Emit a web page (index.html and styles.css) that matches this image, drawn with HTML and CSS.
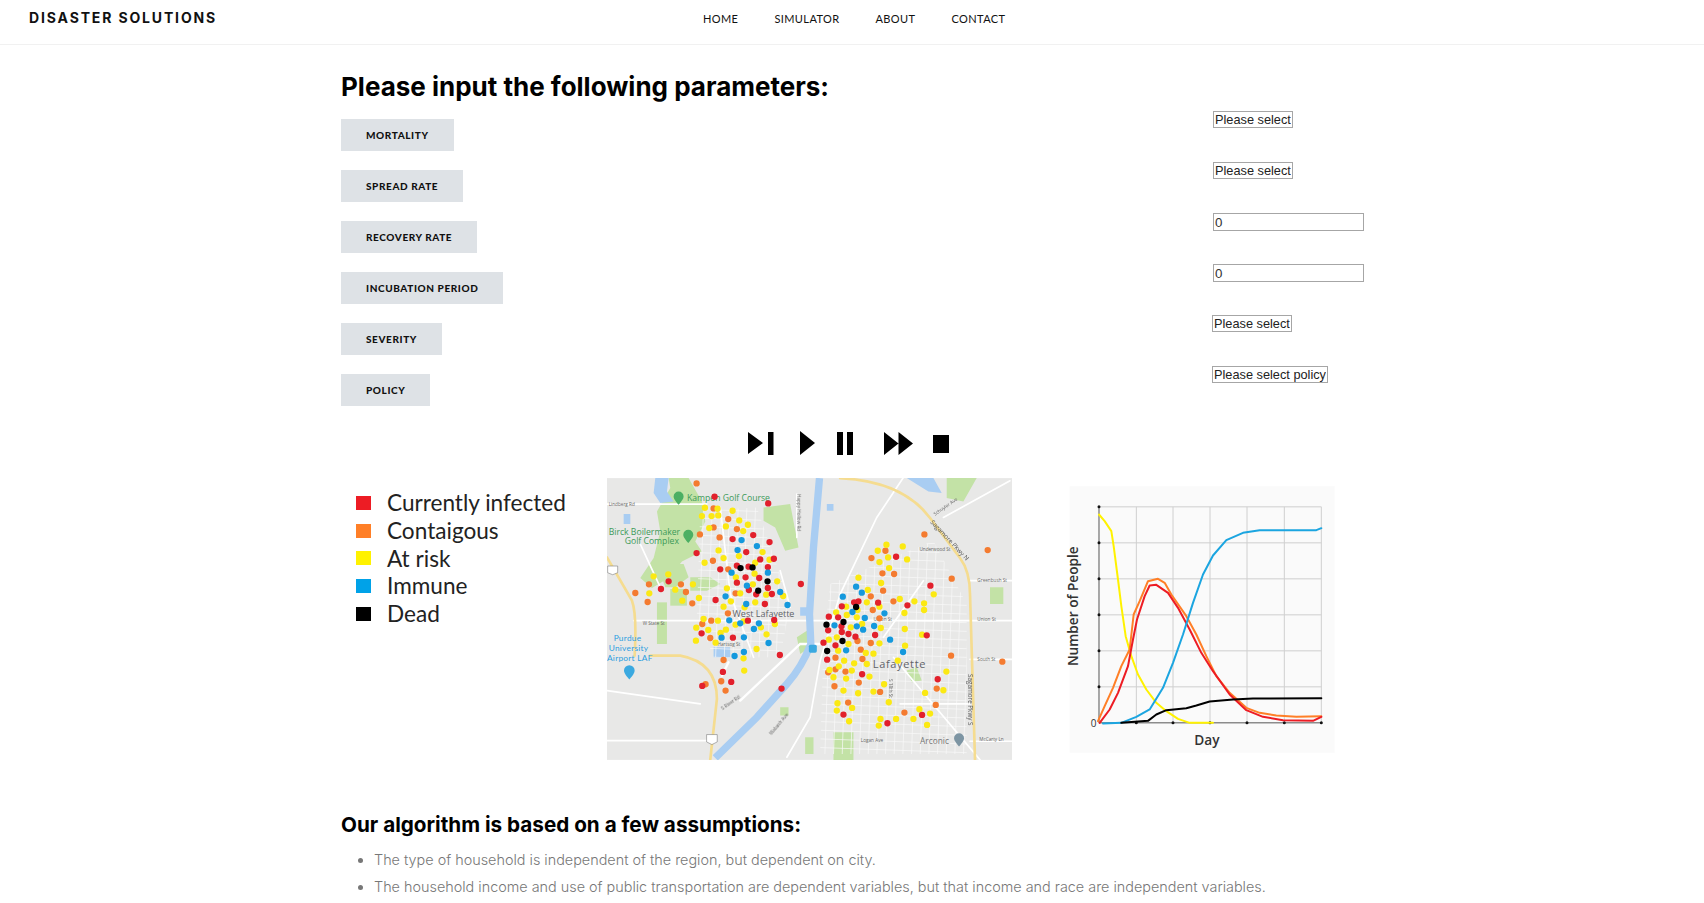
FILE: index.html
```html
<!DOCTYPE html>
<html lang="en">
<head>
  <meta charset="UTF-8">
  <meta name="viewport" content="width=device-width, initial-scale=1.0">
  <title>Disaster Solutions</title>
  <link rel="stylesheet" href="styles.css">
</head>
<body>
  <header class="navbar">
    <a class="brand" href="#">DISASTER SOLUTIONS</a>
    <nav class="nav-links">
      <a href="#">HOME</a>
      <a href="#">SIMULATOR</a>
      <a href="#">ABOUT</a>
      <a href="#">CONTACT</a>
    </nav>
  </header>

  <main class="content">
    <h1>Please input the following parameters:</h1>

    <form class="params">
      <div class="param-labels">
        <button type="button" class="param-btn">MORTALITY</button>
        <button type="button" class="param-btn">SPREAD RATE</button>
        <button type="button" class="param-btn">RECOVERY RATE</button>
        <button type="button" class="param-btn">INCUBATION PERIOD</button>
        <button type="button" class="param-btn">SEVERITY</button>
        <button type="button" class="param-btn">POLICY</button>
      </div>
      <div class="param-inputs">
        <select class="param-select"><option>Please select</option></select>
        <select class="param-select"><option>Please select</option></select>
        <input class="param-number" type="text" value="0">
        <input class="param-number" type="text" value="0">
        <select class="param-select shifted"><option>Please select</option></select>
        <select class="param-select shifted"><option>Please select policy</option></select>
      </div>
    </form>

    <div class="controls">
      <svg class="icon icon-skip" viewBox="0 0 32 24"><path d="M0 1l15 11L0 23zM20 1h5.500v23H20z"/></svg>
      <svg class="icon icon-play" viewBox="0 0 17 24"><path d="M0 0l15 12L0 24z"/></svg>
      <svg class="icon icon-pause" viewBox="0 0 27 24"><path d="M0 1h6v23H0zM10 1h6v23h-6z"/></svg>
      <svg class="icon icon-forward" viewBox="0 0 29 24"><path d="M0 1l14.500 11.500L0 24zM14.500 1L29 12.500 14.500 24z"/></svg>
      <svg class="icon icon-stop" viewBox="0 0 16 24"><path d="M0 4h16v18H0z"/></svg>
    </div>

    <section class="results">
      <ul class="legend">
        <li><span class="swatch infected"></span>Currently infected</li>
        <li><span class="swatch contagious"></span>Contaigous</li>
        <li><span class="swatch risk"></span>At risk</li>
        <li><span class="swatch immune"></span>Immune</li>
        <li><span class="swatch dead"></span>Dead</li>
      </ul>

      <svg class="map" viewBox="20 22 1216 846">
        <defs>
          <pattern id="streets" width="26" height="26" patternUnits="userSpaceOnUse" patternTransform="rotate(2)">
            <path d="M0 1h26M1 0v26" stroke="#f8f8f8" stroke-width="2.500"/>
          </pattern>
        </defs>
        <rect x="20" y="22" width="1216" height="846" fill="#e8e8e7"/>

        <!-- parks -->
        <g fill="#c3e2a6">
          <path d="M205 22h60l40 70 10 60-30 60 20 30-60 30-40 50-50 30-35-30 40-60 20-80-10-60 40-70z"/>
          <path d="M490 110l80-10 25 130-40 10-30-70-35-20z"/>
          <path d="M170 280h80l15 40-40 30-30 0z"/>
          <path d="M270 320h60l30 20-40 20h-50z"/>
          <path d="M210 355h50v50h-50z"/>
          <path d="M170 395h30v125h-30z"/>
          <path d="M1040 22h90l-40 70-50-10zM700 785h60v83h-60zM920 600l30-10 15 40-30 5zM590 500l30-20 10 50-30 20zM615 800h25v50h-25zM540 710h25v25h-25zM1170 350h40v50h-40z"/>
        </g>

        <!-- water -->
        <g fill="#a9cdf2">
          <path d="M165 22h40l-5 40 20 30-40 5-20-30zM920 22h80l25 45-40-5zM340 530h50v30h-50zM680 100h20v20h-20z"/>
          <path d="M70 130h20v30H70zM600 410h25v25h-25z"/>
        </g>

        <!-- town blocks -->
        <path d="M300 120L470 110 570 400 540 560 340 560 290 430z" fill="url(#streets)"/>
        <path d="M690 340L1000 210 1100 400 1100 850 660 850 670 520z" fill="url(#streets)"/>

        <!-- roads -->
        <g fill="none" stroke="#fff" stroke-linecap="round">
          <path stroke-width="5" d="M20 100h300M590 70v130M100 450h1136M20 810h320M560 860l70-120 30-170 60-200 110-230 100-150"/>
          <path stroke-width="5" d="M120 220l60 130M360 110l30 260 70 190M540 300l30 110M880 560l260 308M970 330l-120 170M20 660l280 40"/>
          <path stroke-width="5" d="M1030 140l200-110M1110 330h126M1110 566h126M1110 812h126M900 700h210"/>
          <path stroke-width="7" d="M385 575l-20 40M420 690l180-170h60"/>
        </g>
        <g fill="none" stroke="#f5dc90" stroke-linecap="round">
          <path stroke-width="8" d="M720 22q190 10 270 120l90 120q30 40 30 110l15 496"/>
          <path stroke-width="8" d="M20 260l75 130q15 40 8 165"/>
          <path stroke-width="8" d="M150 555h90q110 20 110 130l-20 183"/>
        </g>

        <!-- river -->
        <path d="M658 22L640 230 628 430 632 520Q605 590 560 640L470 740 345 862" fill="none" stroke="#a9cdf2" stroke-width="22"/>

        <!-- shields -->
        <g fill="#fff" stroke="#666" stroke-width="1.500">
          <path d="M22 286h30v20l-15 6-15-6z"/>
          <path d="M319 792h32v22l-16 8-16-8z"/>
        </g>
        <path class="map-pin-green" d="M235 102c-12-14-15-20-15-25a15 15 0 0 1 30 0c0 5-3 11-15 25zM264 217c-12-14-15-20-15-25a15 15 0 0 1 30 0c0 5-3 11-15 25z"/>
        <path class="map-pin-blue" d="M87 627c-12-14-16-21-16-27a16 16 0 0 1 32 0c0 6-4 13-16 27z"/>
        <path class="map-pin-grey" d="M1077 828c-12-14-15-20-15-25a15 15 0 0 1 30 0c0 5-3 11-15 25z"/>
        <rect x="626" y="522" width="24" height="24" rx="5" fill="#3ba9e0"/>

        <!-- place names -->
        <g class="map-label">
          <text class="park" x="260" y="92">Kampen Golf Course</text>
          <text class="park" x="25" y="193">Birck Boilermaker</text>
          <text class="park" x="73" y="221">Golf Complex</text>
          <text class="town" x="397" y="438">West Lafayette</text>
          <text class="city" x="818" y="592">Lafayette</text>
          <text class="air" x="40" y="510">Purdue</text>
          <text class="air" x="25" y="541">University</text>
          <text class="air" x="20" y="572">Airport LAF</text>
          <text class="poi" x="960" y="820">Arconic</text>
          <text class="street" x="25" y="106">Lindberg Rd</text>
          <text class="street" x="127" y="462">W State St</text>
          <text class="street" x="958" y="240">Underwood St</text>
          <text class="street" x="1132" y="334">Greenbush St</text>
          <text class="street" x="1132" y="451">Union St</text>
          <text class="street" x="1132" y="572">South St</text>
          <text class="street" x="1138" y="810">McCarty Ln</text>
          <text class="street" x="782" y="814">Logan Ave</text>
          <text class="street" x="352" y="526">Hartsog St</text>
          <text class="street" x="820" y="452">Union St</text>
          <text class="road-name" transform="translate(990 155) rotate(47)">Sagamore Pkwy N</text>
          <text class="road-name" transform="translate(1103 610) rotate(90)">Sagamore Pkwy S</text>
          <text class="street" transform="translate(590 70) rotate(90)">Happy Hollow Rd</text>
          <text class="street" transform="translate(1005 135) rotate(-35)">Schuyler Ave</text>
          <text class="street" transform="translate(515 795) rotate(-50)">Wabash Ave</text>
          <text class="street" transform="translate(368 720) rotate(-35)">S River Rd</text>
          <text class="street" transform="translate(868 625) rotate(90)">S 18th St</text>
        </g>

        <!-- case dots -->
        <path class="dots orange" d="M289 38h0M340 113h0M384 145h0M340 170h0M410 175h0M299 191h0M358 200h0M338 270h0M384 296h0M146 341h0M105 367h0M142 394h0M242 341h0M257 364h0M276 398h0M406 368h0M383 428h0M306 460h0M333 450h0M330 502h0M370 568h0M363 632h0M376 660h0M316 641h0M856 240h0M814 262h0M1163 238h0M973 191h0M847 308h0M882 310h0M1055 324h0M812 377h0M849 360h0M880 392h0M818 418h0M838 443h0M1207 573h0M1053 555h0M772 511h0M812 517h0M782 537h0M706 561h0M787 565h0M706 596h0M736 603h0M776 636h0M703 647h0M840 664h0M1010 654h0M1007 703h0M913 726h0M744 696h0M684 605h0"/>
        <path class="dots yellow" d="M314 111h0M352 114h0M305 136h0M334 136h0M354 134h0M397 120h0M417 149h0M443 162h0M377 167h0M327 172h0M429 181h0M355 239h0M370 262h0M313 276h0M416 256h0M487 244h0M508 267h0M465 276h0M463 309h0M160 317h0M204 311h0M147 368h0M225 357h0M278 341h0M296 382h0M246 390h0M380 353h0M392 392h0M370 408h0M420 368h0M498 372h0M531 332h0M458 341h0M407 320h0M465 395h0M433 410h0M353 450h0M310 445h0M288 471h0M324 478h0M361 487h0M377 477h0M406 462h0M430 452h0M430 563h0M432 600h0M287 510h0M346 516h0M482 470h0M499 491h0M469 535h0M524 460h0M549 376h0M859 222h0M833 240h0M908 227h0M864 260h0M838 274h0M921 266h0M867 292h0M843 337h0M775 321h0M803 358h0M899 385h0M943 392h0M972 398h0M972 418h0M1001 371h0M913 427h0M838 408h0M800 395h0M772 418h0M738 408h0M708 425h0M740 433h0M770 440h0M752 470h0M786 460h0M842 472h0M914 475h0M966 492h0M745 520h0M710 500h0M686 507h0M838 518h0M915 525h0M714 540h0M797 547h0M820 549h0M893 570h0M732 570h0M762 578h0M800 580h0M716 587h0M688 598h0M700 620h0M738 624h0M755 600h0M808 618h0M852 641h0M820 663h0M1030 659h0M975 667h0M1039 603h0M730 660h0M774 668h0M866 695h0M712 698h0M756 712h0M710 720h0M958 716h0M990 729h0M940 745h0M888 745h0M841 745h0M836 765h0M747 752h0M981 763h0"/>
        <path class="dots red" d="M343 78h0M504 98h0M459 193h0M397 205h0M508 214h0M438 244h0M289 247h0M480 266h0M521 264h0M445 288h0M410 285h0M503 289h0M360 296h0M436 320h0M477 322h0M410 336h0M503 352h0M446 358h0M515 370h0M468 371h0M346 388h0M494 400h0M522 448h0M443 450h0M304 488h0M398 501h0M539 553h0M602 340h0M368 604h0M393 634h0M306 646h0M544 654h0M182 355h0M205 332h0M991 345h0M888 258h0M922 404h0M834 396h0M775 392h0M725 407h0M686 438h0M714 440h0M724 467h0M684 479h0M725 484h0M825 493h0M745 490h0M766 498h0M670 516h0M706 524h0M681 567h0M786 611h0M1013 626h0M730 732h0M966 733h0M862 758h0M980 494h0M762 395h0"/>
        <path class="dots blue" d="M424 208h0M412 238h0M470 226h0M394 306h0M503 306h0M440 345h0M376 377h0M540 364h0M562 403h0M438 400h0M387 449h0M420 458h0M476 458h0M461 475h0M364 501h0M431 500h0M505 517h0M431 544h0M403 556h0M768 348h0M785 366h0M728 378h0M757 424h0M853 428h0M794 442h0M703 464h0M770 467h0M822 466h0M789 477h0M870 507h0M738 539h0M909 544h0"/>
        <path class="dots black" d="M421 292h0M457 290h0M502 332h0M474 360h0M768 409h0M730 454h0M679 462h0M727 511h0M681 541h0"/>
      </svg>

      <svg class="chart" viewBox="40 20 815 800">
        <rect x="60" y="20" width="795" height="800" fill="#fafafa"/>
        <path class="grid" d="M260 82v648M370 82v648M481 82v648M592 82v648M704 82v648M815 82v648M148 82h667M148 190h667M148 298h667M148 406h667M148 514h667M148 622h667"/>
        <path class="axis" d="M148 82v648h667"/>
        <path class="ticks" d="M148 82h0M148 190h0M148 298h0M148 406h0M148 514h0M148 622h0M260 730h0M370 730h0M481 730h0M592 730h0M704 730h0M815 730h0"/>
        <polyline class="curve" stroke="#fff200" points="148,105 165,125 185,155 192,200 205,300 215,380 228,470 245,530 265,585 290,630 320,670 350,695 385,718 420,730 490,730"/>
        <polyline class="curve" stroke="#ff7f27" points="145,725 165,680 190,625 215,560 240,510 252,405 270,365 295,305 325,298 345,310 365,345 410,410 440,465 470,530 500,590 540,640 590,685 630,700 680,708 740,712 815,710"/>
        <polyline class="curve" stroke="#ed1c24" points="150,730 180,690 205,640 235,560 250,480 262,420 285,350 300,318 320,316 355,340 385,385 420,450 455,520 490,575 540,645 590,692 640,712 700,722 790,724 815,712"/>
        <polyline class="curve" stroke="#1ba5e0" points="160,732 215,730 260,712 300,690 340,625 370,550 400,465 430,370 460,285 490,228 530,182 580,160 630,152 800,152 815,146"/>
        <polyline class="curve" stroke="#000" points="215,730 295,724 320,705 350,692 410,686 440,678 480,666 550,660 610,657 815,656"/>
        <text class="chart-label" transform="translate(84 380) rotate(-90)">Number of People</text>
        <text class="chart-label" x="472" y="798">Day</text>
        <text class="chart-zero" x="132" y="743">0</text>
      </svg>
    </section>

    <section class="assumptions">
      <h2>Our algorithm is based on a few assumptions:</h2>
      <ul>
        <li>The type of household is independent of the region, but dependent on city.</li>
        <li>The household income and use of public transportation are dependent variables, but that income and race are independent variables.</li>
      </ul>
    </section>
  </main>
</body>
</html>
```
FILE: styles.css
```css
* {
  box-sizing: border-box;
}

html, body {
  height: 903px;
  overflow: hidden;
}

body {
  margin: 0;
  font-family: "Inter", sans-serif;
  color: #000;
  background-color: #fff;
}

.navbar {
  display: flex;
  align-items: center;
  height: 45px;
  padding-left: 29px;
  border-bottom: 1px solid #f1f1f1;
}

.brand {
  width: 674px;
  padding-bottom: 9px;
  font-size: 14px;
  font-weight: 700;
  letter-spacing: 1.85px;
  color: #111;
  text-decoration: none;
}

.nav-links {
  display: flex;
  gap: 36px;
  padding-bottom: 7px;
}

.nav-links a {
  font-family: "Lato", sans-serif;
  font-size: 11px;
  font-weight: 400;
  letter-spacing: 0.4px;
  color: #111;
  text-decoration: none;
}

.content {
  width: 1022px;
  margin: 0 auto;
}

h1 {
  margin: 27px 0 0;
  font-size: 26px;
  line-height: 30px;
  font-weight: 700;
}

.params {
  display: flex;
  height: 305px;
}

.param-labels {
  flex: none;
  display: flex;
  flex-direction: column;
  align-items: flex-start;
  gap: 19px;
  width: 872px;
  padding-top: 17px;
}

.param-btn {
  flex: none;
  height: 32px;
  padding: 0 25px;
  border: none;
  background-color: #dee2e6;
  font-family: "Lato", sans-serif;
  font-size: 10px;
  font-weight: 900;
  letter-spacing: 0.6px;
  color: #111;
}

.param-inputs {
  display: grid;
  grid-auto-rows: 51px;
  justify-items: start;
  padding-top: 9px;
}

.param-select {
  appearance: none;
  height: 17px;
  padding: 0 1px;
  border: 1px solid #a6a6a6;
  border-radius: 0;
  background: #fff;
  font-family: "Liberation Sans", sans-serif;
  font-size: 12.75px;
  color: #222;
}

.param-select.shifted {
  margin-left: -1px;
}

.param-number {
  width: 151px;
  height: 18px;
  padding: 0 1px;
  border: 1px solid #a6a6a6;
  font-family: "Liberation Sans", sans-serif;
  font-size: 13.33px;
  color: #333;
}

.controls {
  display: flex;
  gap: 20px;
  height: 24px;
  margin-top: 24px;
  padding-left: 407px;
}

.icon {
  height: 24px;
  fill: #000;
}

.icon-skip { width: 32px; }
.icon-play { width: 17px; }
.icon-pause { width: 27px; }
.icon-forward { width: 29px; }
.icon-stop { width: 16px; }

.results {
  display: flex;
  align-items: flex-start;
  margin-top: 23px;
}

.legend {
  width: 266px;
  margin: 0;
  padding: 11px 0 0 15px;
  list-style: none;
  font-family: "Lato", sans-serif;
  font-size: 22.6px;
  color: #222;
}

.legend li {
  display: flex;
  align-items: center;
  gap: 16px;
  height: 27.700px;
}

.swatch {
  width: 15px;
  height: 14px;
}

.infected { background-color: #ed1c24; }
.contagious { background-color: #ff7f27; }
.risk { background-color: #fff200; }
.immune { background-color: #00a2e8; }
.dead { background-color: #000; }

.map {
  flex: none;
  width: 405px;
  height: 282px;
  filter: blur(0.4px);
}

.map-pin-green { fill: #4caf63; }
.map-pin-blue { fill: #3ba9e0; }
.map-pin-grey { fill: #7d95a3; }

.map-label text {
  font-family: "Open Sans", sans-serif;
}

.map-label .park { font-size: 26px; fill: #3b9a58; }
.map-label .town { font-size: 27px; fill: #5f6368; }
.map-label .city { font-size: 33px; fill: #5f6368; letter-spacing: 2px; }
.map-label .air { font-family: "Lato", sans-serif; font-size: 25px; letter-spacing: 0.8px; fill: #2c9ee0; }
.map-label .poi { font-size: 25px; fill: #777; }
.map-label .street { font-size: 14px; fill: #666; }
.map-label .road-name { font-size: 19px; fill: #555; }

.dots {
  fill: none;
  stroke-width: 19;
  stroke-linecap: round;
}

.dots.orange { stroke: #f47b30; }
.dots.yellow { stroke: #fbe913; }
.dots.red { stroke: #e2202c; }
.dots.blue { stroke: #1599dd; }
.dots.black { stroke: #000; }

.chart {
  flex: none;
  width: 271.670px;
  height: 267px;
  margin: 8px 0 0 51.330px;
}

.grid {
  fill: none;
  stroke: #cfcfcf;
  stroke-width: 3;
}

.axis {
  fill: none;
  stroke: #555;
  stroke-width: 3;
}

.ticks {
  fill: none;
  stroke: #111;
  stroke-width: 9;
  stroke-linecap: round;
}

.curve {
  fill: none;
  stroke-width: 6;
  stroke-linecap: round;
  stroke-linejoin: round;
}

.chart-label {
  font-family: "Open Sans", sans-serif;
  font-size: 41px;
  font-weight: 600;
  fill: #333;
  text-anchor: middle;
}

.chart-zero {
  font-family: "Open Sans", sans-serif;
  font-size: 30px;
  fill: #333;
  text-anchor: middle;
}

.assumptions {
  margin-top: 53px;
}

h2 {
  margin: 0;
  font-size: 20.7px;
  line-height: 24px;
  font-weight: 700;
}

.assumptions ul {
  margin: 13px 0 0;
  padding-left: 33px;
  font-size: 14.4px;
  font-weight: 300;
  color: #777;
}

.assumptions li {
  height: 27px;
  line-height: 20px;
}
```
